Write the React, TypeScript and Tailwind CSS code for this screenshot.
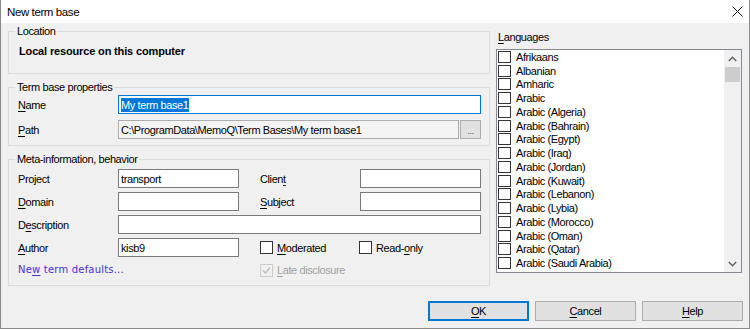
import React from 'react';

const U = ({ children }: { children: React.ReactNode }) => (
  <span className="underline underline-offset-[2px] decoration-[1px]">{children}</span>
);

const languages = [
  'Afrikaans',
  'Albanian',
  'Amharic',
  'Arabic',
  'Arabic (Algeria)',
  'Arabic (Bahrain)',
  'Arabic (Egypt)',
  'Arabic (Iraq)',
  'Arabic (Jordan)',
  'Arabic (Kuwait)',
  'Arabic (Lebanon)',
  'Arabic (Lybia)',
  'Arabic (Morocco)',
  'Arabic (Oman)',
  'Arabic (Qatar)',
  'Arabic (Saudi Arabia)',
];

const CheckBox = ({
  checked = false,
  disabled = false,
  small = false,
}: {
  checked?: boolean;
  disabled?: boolean;
  small?: boolean;
}) => (
  <span
    className={`flex shrink-0 items-center justify-center border ${small ? 'h-[12px] w-[13px]' : 'h-[13px] w-[13px]'} ${
      disabled ? 'border-[#cccccc] bg-[#f0f0f0]' : 'border-[#333333] bg-white'
    }`}
  >
    {checked && (
      <svg width="9" height="9" viewBox="0 0 9 9">
        <path d="M1 4.5 L3.5 7 L8 1.5" fill="none" stroke={disabled ? '#b8b8b8' : '#333'} strokeWidth="1.2" />
      </svg>
    )}
  </span>
);

const TextBox = ({ value, className = '' }: { value?: string; className?: string }) => (
  <div className={`flex h-[19px] items-center border border-[#7a7a7a] bg-white px-[2px] ${className}`}>
    {value}
  </div>
);

const GroupBox = ({ title, children }: { title: string; children: React.ReactNode }) => (
  <fieldset className="border border-[#dcdcdc]">
    <legend className="ml-[6px] px-[2px] leading-[14px] text-black">{title}</legend>
    {children}
  </fieldset>
);

const Button = ({ children, primary }: { children: React.ReactNode; primary?: boolean }) => (
  <button
    className={`flex h-[20px] w-[101px] items-center justify-center bg-[#e1e1e1] border ${
      primary ? 'border-[#0078d7] shadow-[inset_0_0_0_1px_#0078d7]' : 'border-[#adadad]'
    }`}
  >
    {children}
  </button>
);

export default function App() {
  return (
    <div
      className="flex h-[329px] w-[750px] flex-col border-x border-b border-[#8a8a8a] bg-[#f0f0f0] text-[11px] leading-[14px] tracking-[-0.4px] text-black"
      style={{ fontFamily: '"Liberation Sans", Arial, sans-serif' }}
    >
      {/* title bar */}
      <div className="flex h-[23px] items-center justify-between bg-white pl-[6px] pr-[6px]">
        <span className="text-[11.5px]">New term base</span>
        <svg width="11" height="11" viewBox="0 0 11 11">
          <path d="M0.5 0.5 L10.5 10.5 M10.5 0.5 L0.5 10.5" stroke="#111" strokeWidth="1" />
        </svg>
      </div>

      <div className="flex h-[263px] gap-[6px] px-[7px]">
        {/* left column */}
        <div className="mt-[1px] flex w-[482px] flex-col gap-[6px]">
          <GroupBox title="Location">
            <div className="pl-[10px] pt-[6px] pb-[15px] font-bold tracking-[-0.15px]">
              Local resource on this computer
            </div>
          </GroupBox>

          <GroupBox title="Term base properties">
            <div className="flex flex-col gap-[6px] pl-[9px] pt-[1px] pb-[6px]">
              <div className="flex items-center">
                <span className="w-[100px]">
                  <U>N</U>ame
                </span>
                <div className="flex h-[19px] w-[363px] items-center border border-[#0078d7] bg-white px-[2px]">
                  <span className="bg-[#0078d7] text-white">My term base1</span>
                </div>
              </div>
              <div className="flex items-center">
                <span className="w-[100px]">
                  <U>P</U>ath
                </span>
                <div className="flex h-[19px] w-[341px] items-center border border-[#adadad] bg-[#f4f4f4] px-[2px]">
                  C:\ProgramData\MemoQ\Term Bases\My term base1
                </div>
                <div className="ml-[1px] flex h-[19px] w-[21px] items-end justify-center border border-[#adadad] bg-[#e1e1e1] pb-[2px] text-[9px] leading-[9px] text-[#555]">
                  ...
                </div>
              </div>
            </div>
          </GroupBox>

          <GroupBox title="Meta-information, behavior">
            <div className="grid grid-cols-[100px_121px_21px_99px_1px_121px] items-center gap-y-[4px] pl-[9px] pt-[3px] pb-[8px]">
              <span>
                Pro<U>j</U>ect
              </span>
              <TextBox value="transport" />
              <span />
              <span className="col-span-2">
                Clien<U>t</U>
              </span>
              <TextBox />

              <span>
                <U>D</U>omain
              </span>
              <TextBox />
              <span />
              <span className="col-span-2">
                <U>S</U>ubject
              </span>
              <TextBox />

              <span>
                D<U>e</U>scription
              </span>
              <TextBox className="col-span-5" />

              <span>
                <U>A</U>uthor
              </span>
              <TextBox value="kisb9" />
              <span />
              <label className="flex items-center gap-[4px]">
                <CheckBox />
                <span>
                  <U>M</U>oderated
                </span>
              </label>
              <label className="col-span-2 flex items-center gap-[4px]">
                <CheckBox />
                <span>
                  Read-<U>o</U>nly
                </span>
              </label>

              <span
                className="col-span-3 mt-[2px] text-[10px] tracking-[0.2px] text-[#4b2fd0]"
                style={{ fontFamily: '"DejaVu Sans", Verdana, sans-serif' }}
              >
                Ne<U>w</U> term defaults...
              </span>
              <label className="col-span-3 mt-[2px] flex items-center gap-[4px] text-[#a0a0a0]">
                <CheckBox checked disabled />
                <span>
                  <U>L</U>ate disclosure
                </span>
              </label>
            </div>
          </GroupBox>
        </div>

        {/* right column */}
        <div className="flex w-[246px] flex-col pt-[7px]">
          <span className="pl-[2px]">
            <U>L</U>anguages
          </span>
          <div className="mt-[5px] flex h-[224px] border border-[#828790] bg-white">
            <div className="flex-1 overflow-hidden pl-[1px]">
              {languages.map((lang) => (
                <div key={lang} className="flex h-[13.75px] items-center gap-[5px]">
                  <CheckBox small />
                  <span>{lang}</span>
                </div>
              ))}
            </div>
            <div className="flex w-[17px] flex-col bg-[#f0f0f0]">
              <div className="flex h-[17px] items-center justify-center">
                <svg width="9" height="6" viewBox="0 0 9 6">
                  <path d="M0.8 5 L4.5 1.3 L8.2 5" fill="none" stroke="#606060" strokeWidth="1.4" />
                </svg>
              </div>
              <div className="mx-[1px] h-[15px] bg-[#cdcdcd]" />
              <div className="flex-1" />
              <div className="flex h-[17px] items-center justify-center">
                <svg width="9" height="6" viewBox="0 0 9 6">
                  <path d="M0.8 1 L4.5 4.7 L8.2 1" fill="none" stroke="#606060" strokeWidth="1.4" />
                </svg>
              </div>
            </div>
          </div>
        </div>
      </div>

      {/* buttons */}
      <div className="mt-[15px] flex justify-end gap-[6px] pr-[6px]">
        <Button primary>
          <U>O</U>K
        </Button>
        <Button>
          <U>C</U>ancel
        </Button>
        <Button>
          <U>H</U>elp
        </Button>
      </div>
    </div>
  );
}
